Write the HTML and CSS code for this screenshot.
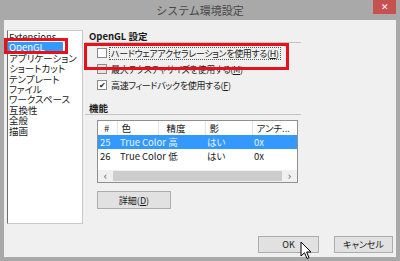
FILE: index.html
```html
<html lang="ja"><head>
    <meta charset="UTF-8">
    <title>システム環境設定</title>
    <link rel="stylesheet" href="styles.css">
</head>
<body>
    <div class="window">
        <div class="titlebar">
            <span></span>
            <span class="title">システム環境設定</span>
            <span class="close">✕</span>
        </div>

        <div class="client">
            <div class="main">
                <!-- Category list -->
                <ul class="category-list">
                    <li>Extensions</li>
                    <li class="selected">OpenGL</li>
                    <li>アプリケーション</li>
                    <li>ショートカット</li>
                    <li>テンプレート</li>
                    <li>ファイル</li>
                    <li>ワークスペース</li>
                    <li>互換性</li>
                    <li>全般</li>
                    <li>描画</li>
                </ul>

                <div class="panel">
                    <div class="section-title">OpenGL 設定</div>
                    <div class="checks">
                        <label class="check-row"><span class="box"></span><span class="focus">ハードウェアアクセラレーションを使用する(<u>H</u>)</span></label>
                        <label class="check-row"><span class="box dim"></span><span>最大テクスチャサイズを使用する(<u>M</u>)</span></label>
                        <label class="check-row"><span class="box checked">✔</span><span>高速フィードバックを使用する(<u>F</u>)</span></label>
                    </div>

                    <div class="section-title second">機能</div>
                    <div class="grid-box">
                        <table class="feature-table">
                            <colgroup>
                                <col style="width: 19px">
                                <col style="width: 41px">
                                <col style="width: 47px">
                                <col style="width: 47px">
                                <col style="width: 47px">
                            </colgroup>
                            <thead>
                                <tr><th class="num">#</th><th>色</th><th class="wide">精度</th><th>影</th><th>アンチ...</th></tr>
                            </thead>
                            <tbody>
                                <tr class="selected"><td>25</td><td colspan="2" class="name">True Color 高</td><td>はい</td><td>0x</td></tr>
                                <tr><td>26</td><td colspan="2" class="name">True Color 低</td><td>はい</td><td>0x</td></tr>
                            </tbody>
                        </table>
                        <div class="hscroll">
                            <span class="arrow">&lsaquo;</span>
                            <span class="thumb"></span>
                            <span class="arrow">&rsaquo;</span>
                        </div>
                    </div>
                    <button class="btn detail">詳細(<u>D</u>)</button>
                </div>
            </div>

            <div class="footer">
                <button class="btn ok">OK</button>
                <button class="btn cancel">キャンセル</button>
            </div>
        </div>

        <!-- Red annotation marks -->
        <div class="mark mark-list"></div>
        <div class="mark mark-check"></div>

        <!-- Mouse pointer -->
        <svg class="cursor" width="13" height="19" viewBox="0 0 13 19">
            <path d="M1 1 L1 15 L4.5 11.8 L7 17.5 L9 16.6 L6.6 11 L11 11 Z" fill="#fff" stroke="#000" stroke-width="1" stroke-linejoin="round"/>
        </svg>
    </div>
</body></html>
```

FILE: styles.css
```css
body {
    margin: 0;
    font-family: "Noto Sans CJK JP", sans-serif;
    font-size: 9px;
    color: #1a1a1a;
}
.window {
    position: relative;
    width: 400px;
    height: 261px;
    box-sizing: border-box;
    padding: 0 4px 4px 4px;
    background-color: #a9a9a9;
    display: flex;
    flex-direction: column;
}
.titlebar {
    height: 20px;
    display: grid;
    grid-template-columns: 1fr auto 1fr;
    align-items: start;
}
.title {
    font-size: 11px;
    line-height: 20px;
    color: #474747;
}
.close {
    justify-self: end;
    width: 23px;
    height: 14px;
    background-color: #c75050;
    color: #fff;
    font-size: 9px;
    line-height: 14px;
    text-align: center;
}
.client {
    flex: 1;
    background-color: #f0f0f0;
    padding: 10px 3px 0 3px;
}
.main {
    display: flex;
}
.category-list {
    width: 76px;
    height: 194px;
    box-sizing: border-box;
    margin: 0;
    padding: 1px 0 0 0;
    list-style: none;
    background-color: #fff;
    border: 1px solid #c9c9c9;
    border-left-color: #6e6e6e;
    font-size: 9.5px;
    font-feature-settings: "palt";
}
.category-list li {
    height: 10.4px;
    line-height: 10.4px;
    padding-left: 1px;
    white-space: nowrap;
}
.category-list li.selected {
    width: 54px;
    background-color: #3399ff;
    color: #fff;
}
.panel {
    width: 216px;
    margin-left: 2px;
    font-feature-settings: "palt";
}
.section-title {
    height: 12px;
    line-height: 12px;
    padding-left: 4px;
    font-size: 9.5px;
    font-weight: bold;
    border-bottom: 1px solid #c4c4c4;
}
.section-title.second {
    margin-top: 9px;
}
.checks {
    padding-top: 2px;
    letter-spacing: -0.35px;
}
.check-row {
    display: flex;
    align-items: center;
    gap: 4px;
    height: 16px;
    padding-left: 12px;
    white-space: nowrap;
}
.box {
    width: 10px;
    height: 10px;
    box-sizing: border-box;
    border: 1px solid #8a8a8a;
    background-color: #fff;
    font-size: 8px;
    line-height: 8px;
    text-align: center;
    color: #222;
}
.box.dim {
    background-color: #e6e6e6;
}
.focus {
    border: 1px dotted #555;
    padding: 0 1px;
    margin-left: -2px;
    line-height: 11px;
}
.grid-box {
    width: 201px;
    height: 63px;
    box-sizing: border-box;
    margin: 5px 0 0 12px;
    border: 1px solid #8e8f8f;
    background-color: #fff;
    display: flex;
    flex-direction: column;
    justify-content: space-between;
    overflow: hidden;
}
.feature-table {
    width: 201px;
    table-layout: fixed;
    border-collapse: collapse;
    font-size: 9.5px;
}
.feature-table th {
    height: 14px;
    padding: 0 0 0 4px;
    text-align: left;
    font-weight: normal;
    border-right: 1px solid #e3e3e3;
    white-space: nowrap;
    overflow: hidden;
}
.feature-table th.num {
    padding-left: 6px;
}
.feature-table th.wide {
    padding-left: 8px;
}
.feature-table td {
    height: 13px;
    padding: 0 0 0 2px;
    white-space: nowrap;
    overflow: hidden;
}
.feature-table td.name {
    padding-left: 3px;
}
.feature-table tr.selected td {
    background-color: #3399ff;
    color: #eaf4ff;
}
.hscroll {
    height: 12px;
    display: flex;
    background-color: #f0f0f0;
}
.hscroll .arrow {
    width: 15px;
    line-height: 11px;
    text-align: center;
    font-size: 11px;
    color: #555;
}
.hscroll .thumb {
    flex: 1;
    margin: 1px 0;
    background-color: #cdcdcd;
}
.btn {
    box-sizing: border-box;
    font-family: inherit;
    font-size: 9px;
    color: #1a1a1a;
    background-color: #e1e1e1;
    border: 1px solid #adadad;
    padding: 0;
    font-feature-settings: "palt";
}
.btn.detail {
    width: 74px;
    height: 18px;
    margin: 8px 0 0 12px;
    display: block;
}
.footer {
    display: flex;
    justify-content: flex-end;
    gap: 15px;
    margin-top: 12px;
}
.btn.ok {
    width: 61px;
    height: 17px;
}
.btn.cancel {
    width: 59px;
    height: 17px;
}
.mark {
    position: absolute;
    box-sizing: border-box;
    border: 3px solid #e3121b;
}
.mark-list {
    left: 4px;
    top: 38px;
    width: 64px;
    height: 16px;
}
.mark-check {
    left: 84px;
    top: 43px;
    width: 205px;
    height: 27px;
}
.cursor {
    position: absolute;
    left: 300px;
    top: 241px;
}
```
